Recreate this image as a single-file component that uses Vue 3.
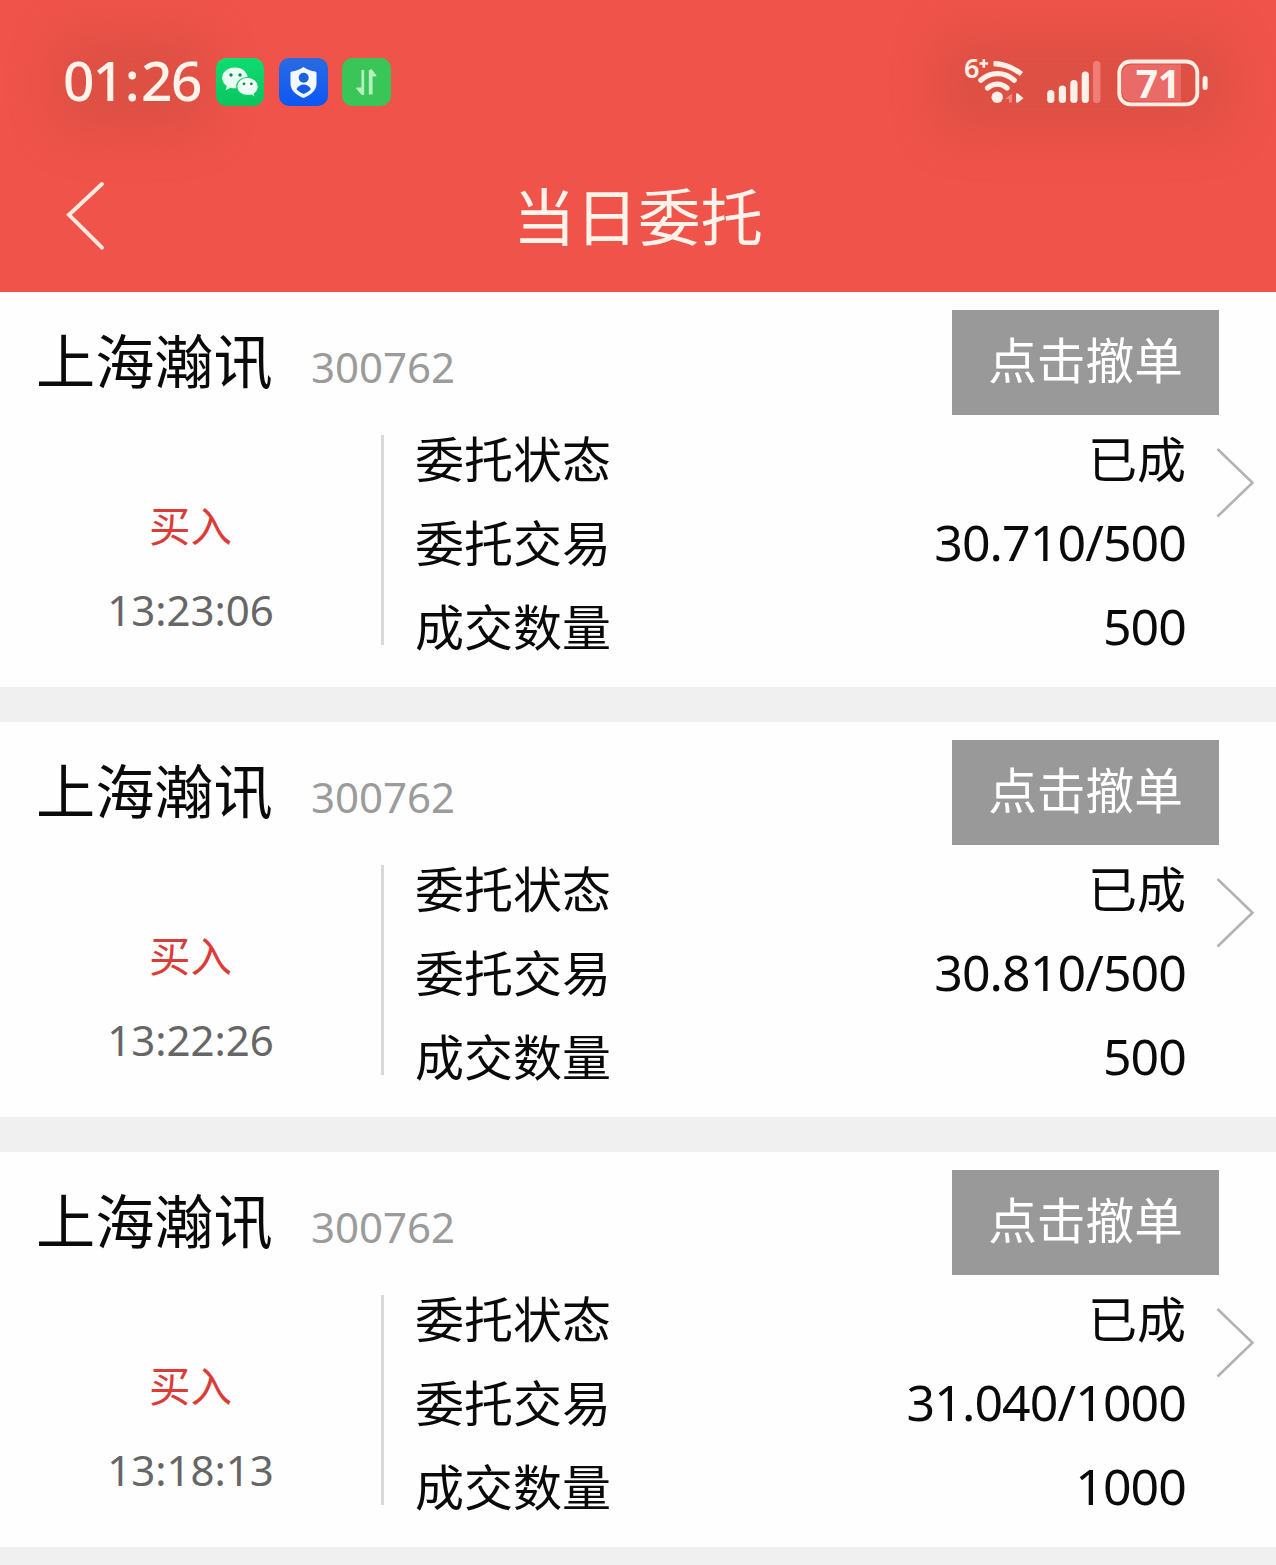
<script setup>
const orders = [
  { name: '上海瀚讯', code: '300762', side: '买入', time: '13:23:06', status: '已成', price: '30.710/500', filled: '500' },
  { name: '上海瀚讯', code: '300762', side: '买入', time: '13:22:26', status: '已成', price: '30.810/500', filled: '500' },
  { name: '上海瀚讯', code: '300762', side: '买入', time: '13:18:13', status: '已成', price: '31.040/1000', filled: '1000' },
]
</script>

<template>
  <div class="page">
    <header class="header">
      <div class="status">
        <span class="clock">01<span class="colon">:</span>26</span>
        <svg class="apps" width="180" height="56" viewBox="213 54 180 56">
          <defs>
            <linearGradient id="wx" x1="0" y1="0" x2="0" y2="1">
              <stop offset="0" stop-color="#0cdd70" />
              <stop offset="1" stop-color="#0bc45f" />
            </linearGradient>
            <linearGradient id="shield" x1="0" y1="0" x2="0" y2="1">
              <stop offset="0" stop-color="#2a6be2" />
              <stop offset="1" stop-color="#0b57f5" />
            </linearGradient>
          </defs>
          <rect x="216" y="58" width="48" height="48" rx="10" fill="url(#wx)" />
          <path d="M235 67.500c-7.200 0-12.800 4.600-12.800 10.400 0 3.300 1.800 6.100 4.600 8l-1.200 4.300 5-2.500c1.400.4 2.900.6 4.400.6 7.100 0 12.700-4.800 12.700-10.400S242.100 67.500 235 67.500z" fill="#e9fff2" />
          <path d="M247.500 77.500c-6.100 0-10.800 4-10.800 9.100s4.700 9.100 10.800 9.100c1.300 0 2.600-.2 3.700-.5l4.100 2.200-1-3.700c2.500-1.700 4-4.200 4-7.100 0-5.100-4.800-9.100-10.800-9.100z" fill="#f0fff6" stroke="#0bcf67" stroke-width="1.200" />
          <g fill="#15855a">
            <circle cx="231" cy="75" r="1.700" /><circle cx="240" cy="75" r="1.700" />
            <circle cx="244" cy="83.800" r="1.400" /><circle cx="251.300" cy="83.800" r="1.400" />
          </g>
          <rect x="279" y="58" width="49" height="48" rx="10" fill="url(#shield)" />
          <path d="M303.500 67c3.500 2.600 7.800 4 11.600 4.500 1 .1 1.400.7 1.400 1.500v10.500c0 6.600-5.100 11.300-13 14.500-7.900-3.200-13-7.900-13-14.500V73c0-.8.5-1.400 1.400-1.500 3.800-.5 8.100-1.900 11.600-4.500z" fill="#f3f8ff" />
          <circle cx="303.700" cy="77.800" r="5" fill="#1c62dc" />
          <path d="M296.500 89c1.600-3 4.300-4.500 7.200-4.500s5.600 1.500 7.200 4.500c-1.900 2.500-4.300 3.900-7.200 5-2.900-1.100-5.300-2.500-7.200-5z" fill="#145ce4" />
          <rect x="342" y="58" width="49" height="48" rx="10" fill="#39c557" />
          <g fill="none" stroke="#b5efbd">
            <path d="M362.800 70v24.500" stroke-width="2.800" />
            <path d="M370.700 94.500V70" stroke-width="3.800" />
          </g>
          <path d="M364.200 94.800h-2.700l-5-5.800c-.6-.8-.2-1.500.7-1.500h5.500zM370 69.200h1.500l4.600 5.800c.6.800.2 1.500-.7 1.500H371z" fill="#b5efbd" />
        </svg>
        <svg class="signals" width="252" height="60" viewBox="960 50 252 60">
          <text x="964" y="78" class="gen">6</text>
          <path d="M979.500 63.500h8.600M983.800 59.200v8.600" fill="none" stroke="#fff1e8" stroke-width="2.600" />
          <g fill="none" stroke="#fff1e8" stroke-width="5.200">
            <path d="M993.500 63.700c10.500.3 19.500 3.800 28 10.300" />
            <path d="M980.800 80.300c10-8.800 23.400-8.800 33.400 0" stroke-linecap="round" />
            <path d="M987.500 88c5.800-5.200 13.800-5.200 19.600 0" stroke-linecap="round" />
          </g>
          <circle cx="997.200" cy="97.300" r="5.700" fill="#fff1e8" />
          <path d="M1012 93.500v9h-3v-3.500h-4z" fill="#f28b82" />
          <path d="M1016 93.500l2 0 5.500 4.700-5.500 4.300h-2z" fill="#fff1e8" />
          <g fill="#fff1e8">
            <rect x="1047.200" y="90" width="7.200" height="13" rx="3.500" />
            <rect x="1058.800" y="85.500" width="7.200" height="17.500" rx="3.500" />
            <rect x="1070.300" y="80" width="7.200" height="23" rx="3.500" />
            <rect x="1081.700" y="71.500" width="7.200" height="31.500" rx="3.500" />
          </g>
          <rect x="1093" y="61" width="7.400" height="42" rx="3.500" fill="#f17e76" />
          <path d="M1181 64.500h-50a9 9 0 0 0-9 9v19a9 9 0 0 0 9 9h50z" fill="#ea6a67" />
          <rect x="1119.300" y="61.500" width="78" height="42.800" rx="11" fill="none" stroke="#ffeee4" stroke-width="3.800" />
          <rect x="1202.600" y="76" width="5" height="14" rx="2.500" fill="#fff1e8" />
          <text x="1158" y="97.500" text-anchor="middle" class="charge">71</text>
        </svg>
      </div>
      <div class="nav">
        <svg class="back" width="44" height="72" viewBox="63 180 44 72">
          <path d="M102 184L69 214.800l33 32.800" fill="none" stroke="#ffe9de" stroke-width="4" stroke-linecap="round" />
        </svg>
        <h1>当日委托</h1>
      </div>
    </header>

    <main>
      <section v-for="order in orders" :key="order.time" class="card">
        <div class="top">
          <span class="name">{{ order.name }}</span>
          <span class="code">{{ order.code }}</span>
          <button class="cancel">点击撤单</button>
        </div>
        <div class="body">
          <div class="side">
            <span class="action">{{ order.side }}</span>
            <span class="time">{{ order.time }}</span>
          </div>
          <dl class="details">
            <div><dt>委托状态</dt><dd class="cjk">{{ order.status }}</dd></div>
            <div><dt>委托交易</dt><dd>{{ order.price }}</dd></div>
            <div><dt>成交数量</dt><dd>{{ order.filled }}</dd></div>
          </dl>
          <svg class="arrow" width="42" height="76" viewBox="1214 444 42 76">
            <path d="M1216.500 449l35 33.700-35 33.800" fill="none" stroke="#b3b3b3" stroke-width="2.600" />
          </svg>
        </div>
      </section>
    </main>
  </div>
</template>

<style>
body {
  background: #f0f0f0;
}
</style>

<style scoped>
.page {
  width: 1276px;
  height: 1565px;
  overflow: hidden;
  background: #f0f0f0;
  color: #0a0a0a;
  font-family: "Noto Sans", "Noto Sans CJK SC", sans-serif;
}
.header {
  position: relative;
  z-index: 0;
  height: 292px;
  overflow: hidden;
  background: #ef5349;
}
/* soft shade behind the clock and the signal icons */
.header::before,
.header::after {
  content: "";
  position: absolute;
  z-index: -1;
  top: 34px;
  height: 100px;
  border-radius: 30px;
  background: #dd5044;
  filter: blur(20px);
}
.header::before {
  left: 55px;
  width: 155px;
}
.header::after {
  left: 938px;
  width: 290px;
}
.status {
  display: flex;
  align-items: center;
  height: 164px;
  padding: 0 64px 0 63px;
}
.clock {
  width: 150px;
  margin-top: -4px;
  color: #fff3ea;
  font-size: 55px;
  font-weight: 500;
  line-height: 76px;
  letter-spacing: -1.600px;
  white-space: nowrap;
}
.colon {
  margin: 0 3px 0 2px;
}
.signals {
  margin: -4px 0 0 auto;
}
.gen {
  fill: #fff1e8;
  font-size: 27px;
  font-weight: 600;
}
.charge {
  fill: #fff5ee;
  font-size: 39px;
  font-weight: 700;
}
.nav {
  display: grid;
  grid-template-columns: 44px 1fr 44px;
  align-items: center;
  height: 104px;
  padding: 0 63px;
}
.nav h1 {
  margin: -5px 0 0;
  color: #fff3ea;
  font-family: "Noto Sans CJK SC", sans-serif;
  font-size: 62.500px;
  font-weight: 400;
  line-height: 90px;
  text-align: center;
}
.card {
  height: 395px;
  margin-bottom: 35px;
  background: #fefefe;
}
.top {
  display: flex;
  height: 143px;
  padding: 0 57px 0 36px;
}
.name {
  width: 275px;
  margin-top: 22px;
  font-family: "Noto Sans CJK SC", sans-serif;
  font-size: 59.200px;
  line-height: 88px;
}
.code {
  margin-top: 45px;
  color: #9b9b9b;
  font-size: 42px;
  line-height: 60px;
}
.cancel {
  width: 267px;
  height: 105px;
  margin: 18px 0 0 auto;
  padding: 0 0 9px;
  border: 0;
  background: #999;
  color: #fff;
  font-family: "Noto Sans CJK SC", sans-serif;
  font-size: 48.700px;
  line-height: 72px;
}
.body {
  display: flex;
  height: 210px;
}
.side {
  display: flex;
  flex-direction: column;
  align-items: center;
  width: 381px;
  border-right: 3px solid #d8d8d8;
}
.action {
  margin-top: 59px;
  color: #dc3b37;
  font-family: "Noto Sans CJK SC", sans-serif;
  font-size: 41.500px;
  line-height: 60px;
}
.time {
  margin-top: 26px;
  color: #666;
  font-size: 42px;
  line-height: 60px;
}
.details {
  width: 771px;
  margin: -19px 29px 0 31px;
}
.details div {
  display: flex;
  justify-content: space-between;
  height: 84px;
  line-height: 84px;
}
.details dt,
.details .cjk {
  margin-top: -1px;
  font-family: "Noto Sans CJK SC", sans-serif;
  font-size: 49px;
  letter-spacing: 0;
}
.details dd {
  margin: 0;
  font-size: 50px;
  letter-spacing: -0.900px;
}
.arrow {
  flex: none;
  margin-top: 9px;
}
</style>
